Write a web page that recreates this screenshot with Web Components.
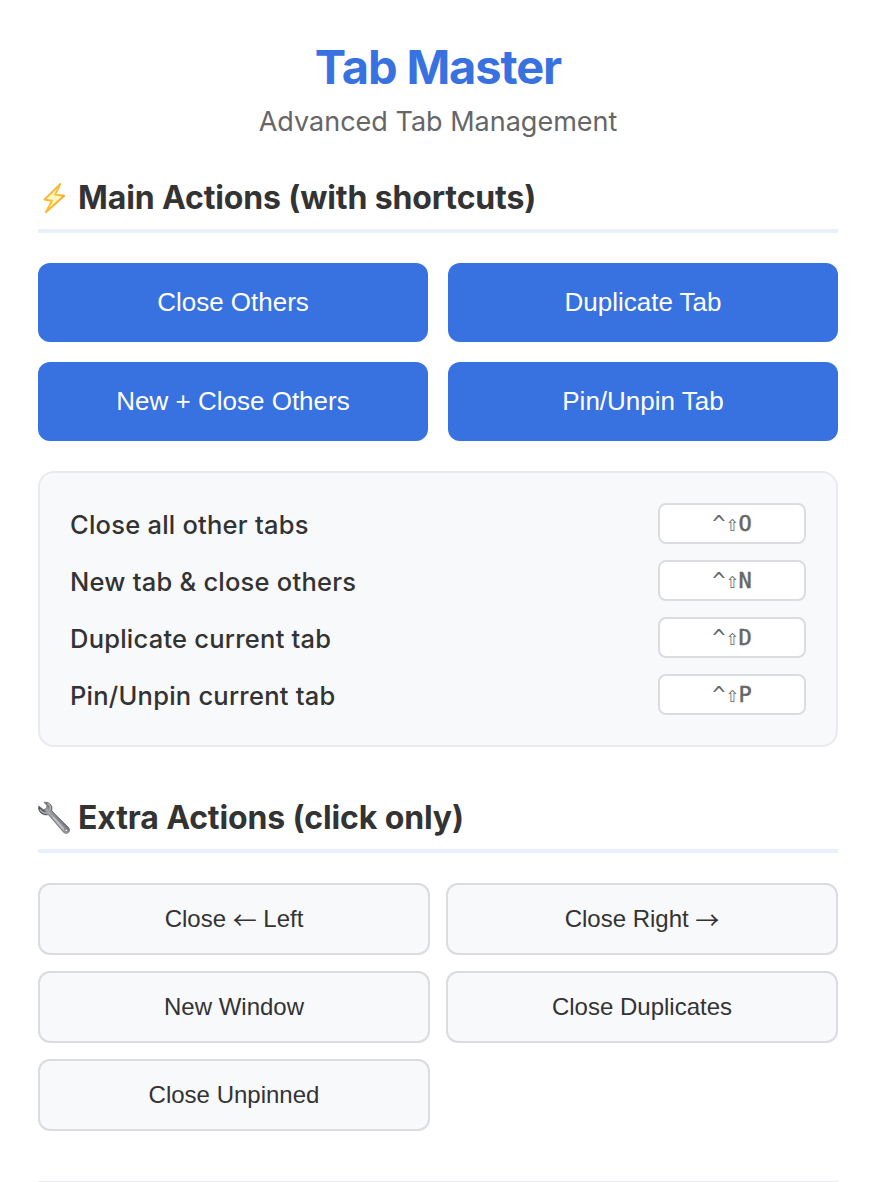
<!DOCTYPE html>
<html lang="en">
<head>
<meta charset="utf-8">
<title>Tab Master</title>
<style>
body { margin: 0; background: #fff; }
</style>
</head>
<body>
<tab-master></tab-master>
<script>
const define = (name, html) => {
  const template = document.createElement('template');
  template.innerHTML = html;
  customElements.define(name, class extends HTMLElement {
    constructor() {
      super();
      this.attachShadow({ mode: 'open' }).append(template.content.cloneNode(true));
    }
  });
};

define('popup-header', `
<style>
:host { display: block; text-align: center; white-space: nowrap; }
h1 { margin: 0; font-size: 47px; line-height: 56px; font-weight: 700; letter-spacing: -1.1px; color: #3871e0; }
p { margin: 10px 0 0; font-size: 27px; line-height: 34px; color: #666; }
</style>
<h1><slot></slot></h1>
<p><slot name="subtitle"></slot></p>`);

define('section-title', `
<style>
:host { display: block; border-bottom: 4px solid #e8f0fe; height: 48px; }
h2 { margin: 0; display: flex; align-items: center; height: 34px; font-size: 32px; line-height: 34px; font-weight: 700; color: #333; white-space: nowrap; letter-spacing: -0.13px; }
::slotted(svg) { width: 32px; height: 34px; margin-right: 8px; flex: none; }
</style>
<h2><slot name="icon"></slot><span><slot></slot></span></h2>`);

define('action-button', `
<style>
:host { display: block; }
button { box-sizing: border-box; width: 100%; height: 79px; border: 0; border-radius: 12px; background: #3871e0; color: #fff; font: 26px/30px "Liberation Sans", Arial, sans-serif; padding: 0 0 2px; display: block; }
:host([extra]) button { height: 72px; border: 2px solid #dadce0; background: #f8f9fb; color: #333; font-size: 24px; padding: 0; }
</style>
<button><slot></slot></button>`);

define('button-grid', `
<style>
:host { display: grid; grid-template-columns: 1fr 1fr; gap: var(--gap, 20px); }
</style>
<slot></slot>`);

define('shortcut-list', `
<style>
:host { box-sizing: border-box; display: flex; flex-direction: column; gap: 16px; border: 2px solid #e8eaed; border-radius: 16px; background: #f8f9fb; padding: 30px; height: 276px; }
</style>
<slot></slot>`);

define('shortcut-row', `
<style>
:host { display: flex; align-items: center; justify-content: space-between; height: 41px; font-size: 25.5px; line-height: 32px; font-weight: 500; letter-spacing: .23px; color: #333; white-space: nowrap; }
.label { padding-top: 2px; }
kbd { box-sizing: border-box; width: 148px; height: 41px; border: 2px solid #dadce0; border-radius: 8px; background: #fff; color: #666; font: 22px/37px "DejaVu Sans Mono", monospace; letter-spacing: -.1px; text-align: center; }
::slotted([slot="keys"]) { -webkit-text-stroke: .5px #666; }
</style>
<span class="label"><slot></slot></span><kbd>^⇧<slot name="keys"></slot></kbd>`);

define('tab-master', `
<style>
:host { box-sizing: border-box; display: block; width: 874px; height: 1182px; overflow: hidden; padding: 39px 36px 0 38px; font-family: Inter, sans-serif; }
section-title { margin-top: 42px; }
.main { margin-top: 30px; }
shortcut-list { margin-top: 30px; }
section-title.second { margin-top: 54px; }
.extra { --gap: 16px; margin-top: 30px; }
.arrow { font-family: "Noto Sans CJK JP", sans-serif; line-height: 0; position: relative; top: 2px; }
footer { margin-top: 50px; border-top: 1px solid #e8eaed; }
</style>
<popup-header>Tab Master<span slot="subtitle">Advanced Tab Management</span></popup-header>
<section-title>
<svg slot="icon" viewBox="0 0 32 34"><defs><linearGradient id="g" x1="0" y1="0" x2="1" y2="1"><stop offset="0" stop-color="#f79a3a"/><stop offset=".5" stop-color="#fbc02f"/><stop offset="1" stop-color="#f28b2d"/></linearGradient></defs><path d="M22.3 2.8 6.5 18.6 14 19.7 7.8 31.2 26.2 14.8 17.2 13.6Z" fill="#fff6c2" stroke="url(#g)" stroke-width="1.9" stroke-linejoin="round"/></svg>Main Actions (with shortcuts)</section-title>
<button-grid class="main">
<action-button>Close Others</action-button><action-button>Duplicate Tab</action-button>
<action-button>New + Close Others</action-button><action-button>Pin/Unpin Tab</action-button>
</button-grid>
<shortcut-list>
<shortcut-row>Close all other tabs<span slot="keys">O</span></shortcut-row>
<shortcut-row>New tab &amp; close others<span slot="keys">N</span></shortcut-row>
<shortcut-row>Duplicate current tab<span slot="keys">D</span></shortcut-row>
<shortcut-row>Pin/Unpin current tab<span slot="keys">P</span></shortcut-row>
</shortcut-list>
<section-title class="second">
<svg slot="icon" viewBox="0 0 32 34"><defs><linearGradient id="w" gradientUnits="userSpaceOnUse" x1="14" y1="21" x2="21" y2="15"><stop offset="0" stop-color="#4e4f53"/><stop offset=".4" stop-color="#a9abaf"/><stop offset=".65" stop-color="#8d8f94"/><stop offset="1" stop-color="#5e5f64"/></linearGradient></defs><path d="M6 1.3C10.5.6 14.2 3.4 14 7.6L13.8 9.8 30.8 26.8C33.2 30.4 29.3 34 25.8 31.6L10.3 13.6C6.5 14.8 1.2 12.6.5 7.4L.8 5 5.3 8.6 8.6 7.4 8.8 4.4Z" fill="url(#w)" stroke="#66686d" stroke-width=".7"/><path d="M2 8.3C4 12.5 8 12.5 11.3 11.5M9.5 2.6C12.5 4 12.8 7 11.8 9.5" fill="none" stroke="#b9bcc1" stroke-width="1.3"/><path d="M15 16 25.5 28" stroke="#c6c7ca" stroke-width="1.3"/><circle cx="28.3" cy="29.4" r="1.4" fill="#f5f5f5" stroke="#5a5555" stroke-width=".7"/></svg>Extra Actions (click only)</section-title>
<button-grid class="extra">
<action-button extra>Close <span class="arrow">←</span> Left</action-button><action-button extra>Close Right <span class="arrow">→</span></action-button>
<action-button extra>New Window</action-button><action-button extra>Close Duplicates</action-button>
<action-button extra>Close Unpinned</action-button>
</button-grid>
<footer></footer>`);
</script>
</body>
</html>
